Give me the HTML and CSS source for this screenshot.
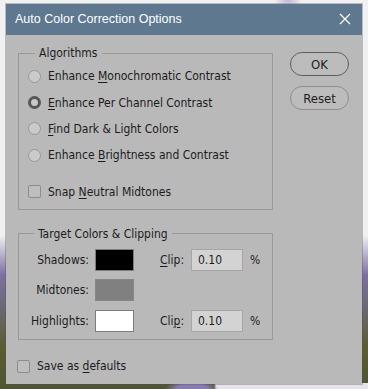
FILE: index.html
```html
<!DOCTYPE html>
<html>

<head>
    <meta charset="UTF-8">
    <meta name="viewport" content="width=device-width, initial-scale=1">
    <title>Auto Color Correction Options</title>
    <link rel="stylesheet" href="styles.css">
</head>

<body>
<div class="dialog">
    <div class="titlebar">
        <span class="title">Auto Color Correction Options</span>
        <svg class="luk" width="12" height="12" viewBox="0 0 12 12">
            <path d="M1 1 L11 11 M11 1 L1 11" stroke="#fff" stroke-width="1.2" fill="none"/>
        </svg>
    </div>

    <div class="indhold">
        <div class="venstre">
            <fieldset class="gruppe algo">
                <legend>Algorithms</legend>
                <label class="valg"><span class="radio"></span><span>Enhance <u>M</u>onochromatic Contrast</span></label>
                <label class="valg"><span class="radio valgt"></span><span><u>E</u>nhance Per Channel Contrast</span></label>
                <label class="valg"><span class="radio"></span><span><u>F</u>ind Dark &amp; Light Colors</span></label>
                <label class="valg"><span class="radio"></span><span>Enhance <u>B</u>rightness and Contrast</span></label>
                <label class="valg snap"><span class="check"></span><span>Snap <u>N</u>eutral Midtones</span></label>
            </fieldset>

            <fieldset class="gruppe farver">
                <legend>Target Colors &amp; Clipping</legend>
                <div class="raekke">
                    <span class="navn">Shadows:</span>
                    <span class="felt sort"></span>
                    <span class="clip"><u>C</u>lip:</span>
                    <span class="tal">0.10</span>
                    <span class="pct">%</span>
                </div>
                <div class="raekke">
                    <span class="navn">Midtones:</span>
                    <span class="felt graa"></span>
                </div>
                <div class="raekke">
                    <span class="navn">Highlights:</span>
                    <span class="felt hvid"></span>
                    <span class="clip">Cli<u>p</u>:</span>
                    <span class="tal">0.10</span>
                    <span class="pct">%</span>
                </div>
            </fieldset>
        </div>

        <div class="knapper">
            <button class="knap standard">OK</button>
            <button class="knap">Reset</button>
        </div>
    </div>

    <label class="valg gem"><span class="check"></span><span>Save as <u>d</u>efaults</span></label>
</div>
</body>

</html>
```

FILE: styles.css
```css
body {
    margin: 0;
    width: 368px;
    height: 389px;
    overflow: hidden;
    font-family: "DejaVu Sans Condensed", "Liberation Sans", Arial, sans-serif;
    font-size: 12px;
    color: #1c1c1c;
    background:
        radial-gradient(ellipse 28px 14px at 192px 392px, #8a7bb5 0, #8a7bb5 60%, transparent 100%),
        radial-gradient(ellipse 14px 6px at 288px 1px, #c6b6d6 0, transparent 100%),
        linear-gradient(to right, transparent 0, transparent 214px, #e6e4ea 216px) bottom / 100% 6px no-repeat,
        linear-gradient(to bottom, #f1f1f1 0, #f1f1f1 235px, #7e6fa2 275px, #6f6a80 300px, #5b5c32 345px, #4f5530 389px);
    padding-top: 4px;
    box-sizing: border-box;
}

.dialog {
    margin-left: 6px;
    width: 356px;
    height: 380px;
    background-color: #b9b9b9;
    box-shadow: 0 0 0 1px rgba(70, 85, 100, 0.35);
    display: flex;
    flex-direction: column;
}

.titlebar {
    height: 31px;
    background-color: #5e7890;
    display: flex;
    align-items: center;
    justify-content: space-between;
    padding: 0 11px 0 9px;
}

.title {
    color: white;
    font-family: "Liberation Sans", Arial, sans-serif;
    font-size: 12.5px;
    padding-bottom: 1px;
}

.luk {
    display: block;
    margin-bottom: 2px;
}

.indhold {
    display: flex;
    padding: 10px 0 0 12px;
}

.venstre {
    width: 255px;
}

.gruppe {
    margin: 0;
    padding: 0;
    border: 1px solid #999999;
    min-width: 0;
}

.gruppe legend {
    margin-left: 15px;
    padding: 0 4px;
    line-height: 16px;
}

.algo {
    padding: 2px 0 4px 9px;
}

.algo legend {
    margin-left: 7px;
}

.valg {
    display: flex;
    align-items: center;
    height: 26.4px;
}

.valg u, .clip u {
    text-decoration-thickness: 1px;
    text-underline-offset: 2px;
}

.radio {
    width: 13px;
    height: 13px;
    border-radius: 50%;
    box-sizing: border-box;
    border: 1px solid #979797;
    background-color: #cacaca;
    margin-right: 7px;
}

.radio.valgt {
    border: 3.5px solid #555555;
    background-color: #c8c8c8;
}

.check {
    width: 13px;
    height: 13px;
    box-sizing: border-box;
    border: 1px solid #8c8c8c;
    border-radius: 2px;
    background-color: #bebebe;
    margin-right: 7px;
}

.snap {
    margin-top: 10px;
}

.farver {
    margin-top: 16px;
    padding: 7px 0 7px 0;
}

.raekke {
    display: flex;
    align-items: center;
    height: 22px;
    margin-bottom: 8.5px;
}

.raekke:last-child {
    margin-bottom: 0;
}

.navn {
    width: 70px;
    text-align: right;
    margin-right: 6px;
}

.felt {
    width: 39px;
    height: 22px;
    box-sizing: border-box;
    border: 1px solid #7d7d7d;
}

.sort {
    background-color: #000;
}

.graa {
    background-color: #808080;
    border-color: #868686;
}

.hvid {
    background-color: #fff;
}

.clip {
    margin-left: 26px;
    width: 31px;
}

.tal {
    width: 52px;
    height: 22px;
    box-sizing: border-box;
    border: 1px solid #a6a6a6;
    background-color: #d3d3d3;
    padding-left: 6px;
    line-height: 20px;
}

.pct {
    margin-left: 7px;
}

.knapper {
    display: flex;
    flex-direction: column;
    margin-left: 17px;
    padding-top: 7px;
}

.knap {
    width: 59px;
    height: 24px;
    border-radius: 12px;
    border: 1px solid #8e8e8e;
    background-color: #bcbcbc;
    font-family: "DejaVu Sans Condensed", "Liberation Sans", Arial, sans-serif;
    font-size: 13px;
    color: #1c1c1c;
    padding: 0;
    margin-bottom: 10px;
}

.knap.standard {
    border-color: #5f5f5f;
}

.gem {
    margin: 13px 0 0 11px;
}
```
